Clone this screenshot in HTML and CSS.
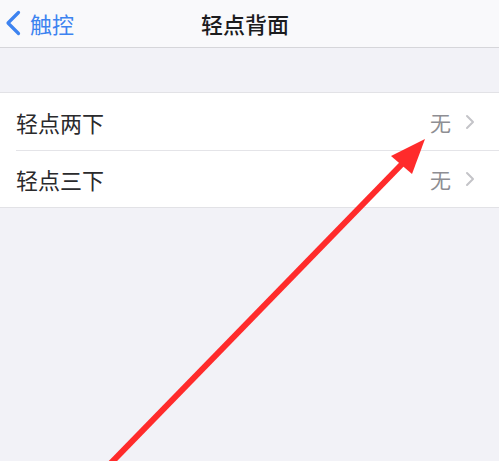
FILE: index.html
```html
<!DOCTYPE html>
<html lang="zh">
<head>
<meta charset="utf-8">
<link rel="stylesheet" href="styles.css">
</head>
<body>
<div class="screen">
  <header class="nav">
    <div class="back">
      <svg class="back-chev" width="16" height="26" viewBox="0 0 16 26"><path d="M13.5 2.5 L3 13 L13.5 23.5" fill="none" stroke="#3d83f0" stroke-width="3.2" stroke-linecap="round" stroke-linejoin="round"/></svg>
      <span>触控</span>
    </div>
    <div class="title">轻点背面</div>
  </header>
  <div class="spacer"></div>
  <div class="group">
    <div class="row">
      <span class="label">轻点两下</span>
      <span class="value">无</span>
      <svg class="chev" width="10" height="16" viewBox="0 0 10 16"><path d="M2 2 L8 8 L2 14" fill="none" stroke="#c4c4c8" stroke-width="2" stroke-linecap="round" stroke-linejoin="round"/></svg>
    </div>
    <div class="row">
      <span class="label">轻点三下</span>
      <span class="value">无</span>
      <svg class="chev" width="10" height="16" viewBox="0 0 10 16"><path d="M2 2 L8 8 L2 14" fill="none" stroke="#c4c4c8" stroke-width="2" stroke-linecap="round" stroke-linejoin="round"/></svg>
    </div>
  </div>
  <svg class="arrow" width="499" height="461" viewBox="0 0 499 461">
    <line x1="110" y1="464" x2="402" y2="164" stroke="#ff2b2b" stroke-width="6"/>
    <polygon points="425,139 391,156 412,174" fill="#ff2b2b"/>
  </svg>
</div>
</body>
</html>
```
FILE: styles.css
```css
* { box-sizing: border-box; }
html, body { margin: 0; padding: 0; }
body {
  width: 499px;
  height: 461px;
  overflow: hidden;
  background: #f2f2f7;
  font-family: "Noto Sans CJK SC", "Noto Sans", sans-serif;
}
.screen { position: relative; width: 499px; height: 461px; }
.nav {
  height: 48px;
  background: #f9f9fb;
  border-bottom: 1px solid #d6d6da;
  display: flex;
  align-items: center;
  position: relative;
}
.back {
  display: flex;
  align-items: center;
  padding-left: 5px;
  color: #3d83f0;
  font-size: 22px;
  gap: 9px;
  height: 100%;
  margin-top: -1px;
}
.back span { line-height: 1; }
.title {
  position: absolute;
  left: 0; right: 0; top: 0; bottom: 0;
  display: flex;
  align-items: center;
  justify-content: center;
  font-size: 22px;
  color: #1c1c1e;
  font-weight: 500;
  padding-right: 9px;
  margin-top: -2px;
}
.spacer { height: 44px; }
.group {
  background: #fff;
  border-top: 1px solid #e2e2e6;
  border-bottom: 1px solid #e2e2e6;
}
.row {
  height: 57px;
  display: flex;
  align-items: center;
  padding: 0 24px 0 16px;
  position: relative;
}
.row + .row { border-top: 1px solid #e4e4e8; margin-left: 16px; padding-left: 0; }
.label { flex: 1; font-size: 22px; color: #2a2a2c; }
.value { font-size: 21px; color: #8e8e93; margin-right: 14px; }
.chev { display: block; }
.arrow { position: absolute; left: 0; top: 0; pointer-events: none; }
```
